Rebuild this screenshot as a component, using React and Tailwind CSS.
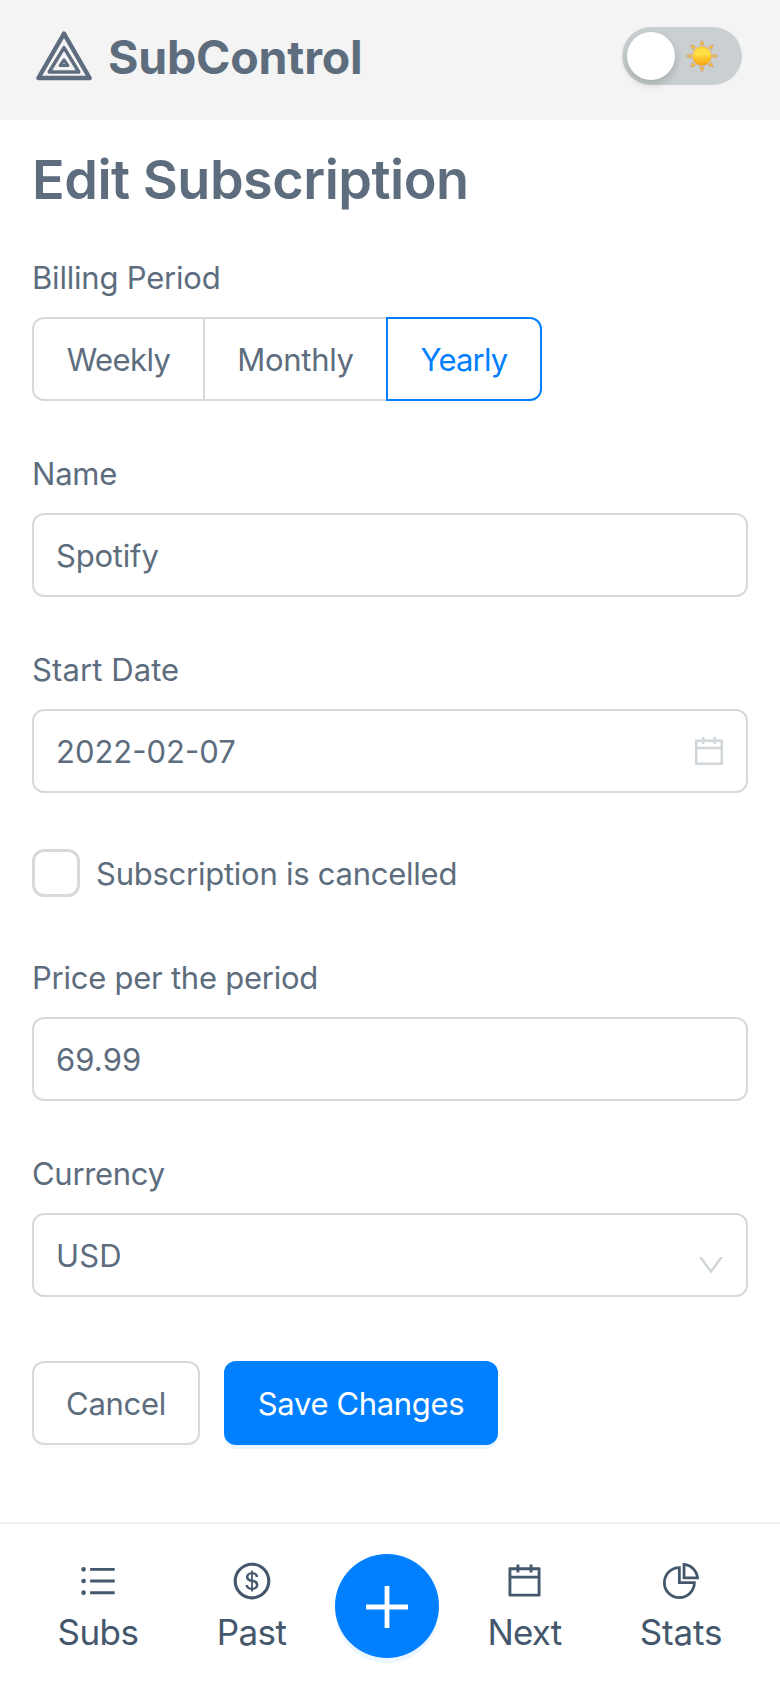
import React from "react";
import {
  AiOutlineCalendar,
  AiOutlineDollarCircle,
  AiOutlineDown,
  AiOutlinePieChart,
  AiOutlineUnorderedList,
} from "react-icons/ai";

function Logo() {
  return (
    <svg className="h-[50px] w-[56px]" viewBox="0 0 56 50" fill="none" stroke="currentColor" strokeLinejoin="round">
      <path d="M28 2.6 L53.6 47 H2.4 Z" strokeWidth="4.4" />
      <path d="M28 16.6 L42.8 41 H13.2 Z" strokeWidth="3.4" />
      <path d="M28 28.8 L31.9 34.6 H24.1 Z" strokeWidth="3" />
    </svg>
  );
}

function Sun() {
  const rays = [0, 45, 90, 135, 180, 225, 270, 315];
  return (
    <svg className="h-[34px] w-[34px]" viewBox="0 0 34 34">
      <defs>
        <linearGradient id="sun-disc" x1="0" y1="0" x2="0" y2="1">
          <stop offset="0" stopColor="#fdd835" />
          <stop offset="0.4" stopColor="#ffe04a" />
          <stop offset="0.6" stopColor="#fdc62a" />
          <stop offset="1" stopColor="#fba41a" />
        </linearGradient>
      </defs>
      {rays.map((a) => (
        <path key={a} d="M17 1 L19.1 5.9 H14.9 Z" fill="#fcc02c" stroke="#d0a080" strokeWidth="0.7" transform={`rotate(${a} 17 17)`} />
      ))}
      <circle cx="17" cy="17" r="9.5" fill="url(#sun-disc)" stroke="#e5a040" strokeWidth="0.6" />
    </svg>
  );
}

function Field({ label, tracking, children }) {
  return (
    <div>
      <div className={`mb-[19px] h-10 leading-10 ${tracking}`}>{label}</div>
      {children}
    </div>
  );
}

function Box({ tracking = "", icon, children }) {
  return (
    <div className="flex h-[84px] items-center justify-between rounded-xl border-2 border-[#d9d9d9] pr-[19px] pl-[22px]">
      <span className={`pt-[2px] ${tracking}`}>{children}</span>
      {icon}
    </div>
  );
}

function NavItem({ icon, label, className }) {
  return (
    <div className={`flex w-20 flex-col items-center pt-[36px] ${className}`}>
      {icon}
      <span className="mt-2 h-11 text-[35px] leading-[44px] whitespace-nowrap">{label}</span>
    </div>
  );
}

export default function App() {
  return (
    <div className="flex h-[1688px] w-[780px] flex-col bg-white font-['Inter','Liberation_Sans',sans-serif] text-[31px] text-[#5d6d7e]">
      <header className="flex h-[120px] items-start justify-between bg-[#f4f4f4] pr-[38px] pl-9">
        <div className="flex pt-[29px]">
          <div className="pt-[2px]">
            <Logo />
          </div>
          <span className="ml-4 text-[46.5px] leading-[56px] font-bold tracking-[-0.2px]">SubControl</span>
        </div>
        <div className="mt-[27px] flex h-[58px] w-[120px] items-center justify-between rounded-full bg-[#cacfd2] pr-[23px] pl-[5px]">
          <div className="h-12 w-12 rounded-full bg-white shadow-[0_4px_8px_rgba(0,35,11,0.2)]" />
          <Sun />
        </div>
      </header>

      <main className="flex h-[1402px] flex-col px-8 pt-7">
        <h1 className="h-16 text-[54px] leading-[64px] font-semibold tracking-[-0.5px]">Edit Subscription</h1>

        <div className="mt-[46px] flex flex-col gap-[53px]">
          <Field label="Billing Period" tracking="tracking-[-0.2px]">
            <div className="flex h-[84px]">
              <div className="flex w-[171px] items-center justify-center rounded-l-xl border-2 border-r-0 border-[#d9d9d9] pt-[2px] tracking-[-0.6px]">Weekly</div>
              <div className="flex w-[183px] items-center justify-center border-2 border-r-0 border-[#d9d9d9] pt-[2px] tracking-[-0.3px]">Monthly</div>
              <div className="flex w-[156px] items-center justify-center rounded-r-xl border-2 border-[#0080ff] pt-[2px] tracking-[-0.8px] text-[#0080ff]">Yearly</div>
            </div>
          </Field>
          <Field label="Name" tracking="tracking-[-0.2px]">
            <Box tracking="tracking-[-0.2px]">Spotify</Box>
          </Field>
          <Field label="Start Date" tracking="tracking-[0.1px]">
            <Box icon={<AiOutlineCalendar size={36} color="#d0d6d9" />}>2022-02-07</Box>
          </Field>
        </div>

        <label className="mt-14 flex h-12 items-center">
          <span className="h-12 w-12 rounded-xl border-3 border-[#d9d9d9]" />
          <span className="ml-4 pt-[2px] tracking-[-0.25px]">Subscription is cancelled</span>
        </label>

        <div className="mt-[61px] flex flex-col gap-[53px]">
          <Field label="Price per the period" tracking="tracking-[-0.25px]">
            <Box tracking="tracking-[0.1px]">69.99</Box>
          </Field>
          <Field label="Currency" tracking="tracking-[-0.3px]">
            <Box tracking="tracking-[0.2px]" icon={<AiOutlineDown size={32} color="#d0d6d9" className="mt-5" />}>
              USD
            </Box>
          </Field>
        </div>

        <div className="mt-16 flex h-[84px] gap-6">
          <button className="w-[168px] rounded-xl border-2 border-[#d9d9d9] bg-white pt-[2px] tracking-[-0.3px] shadow-[0_4px_0_rgba(0,0,0,0.015)]">Cancel</button>
          <button className="w-[274px] rounded-xl bg-[#0080ff] pt-[2px] tracking-[-0.35px] text-white shadow-[0_4px_0_rgba(5,145,255,0.08)]">Save Changes</button>
        </div>
      </main>

      <nav className="flex h-[166px] border-t-2 border-[#f0f0f0] pl-[58px] text-[#44576c]">
        <NavItem icon={<AiOutlineUnorderedList size={42} />} label="Subs" className="tracking-[-0.5px]" />
        <NavItem icon={<AiOutlineDollarCircle size={42} />} label="Past" className="ml-[73.5px] tracking-[-0.6px]" />
        <div className="mt-[30px] ml-[43.5px] flex h-[104px] w-[104px] items-center justify-center rounded-full bg-[#0080ff] pt-[2px] shadow-[0_5px_0_rgba(5,145,255,0.08)]">
          <svg className="h-[42px] w-[42px]" viewBox="0 0 42 42" fill="#ffffff">
            <path d="M18.6 0h4.8v18.6H42v4.8H23.4V42h-4.8V23.4H0v-4.8h18.6z" />
          </svg>
        </div>
        <NavItem icon={<AiOutlineCalendar size={41} className="mb-px" />} label="Next" className="ml-[45.5px] tracking-[-0.8px]" />
        <NavItem icon={<AiOutlinePieChart size={42} />} label="Stats" className="ml-[76.5px] tracking-[-0.2px]" />
      </nav>
    </div>
  );
}
